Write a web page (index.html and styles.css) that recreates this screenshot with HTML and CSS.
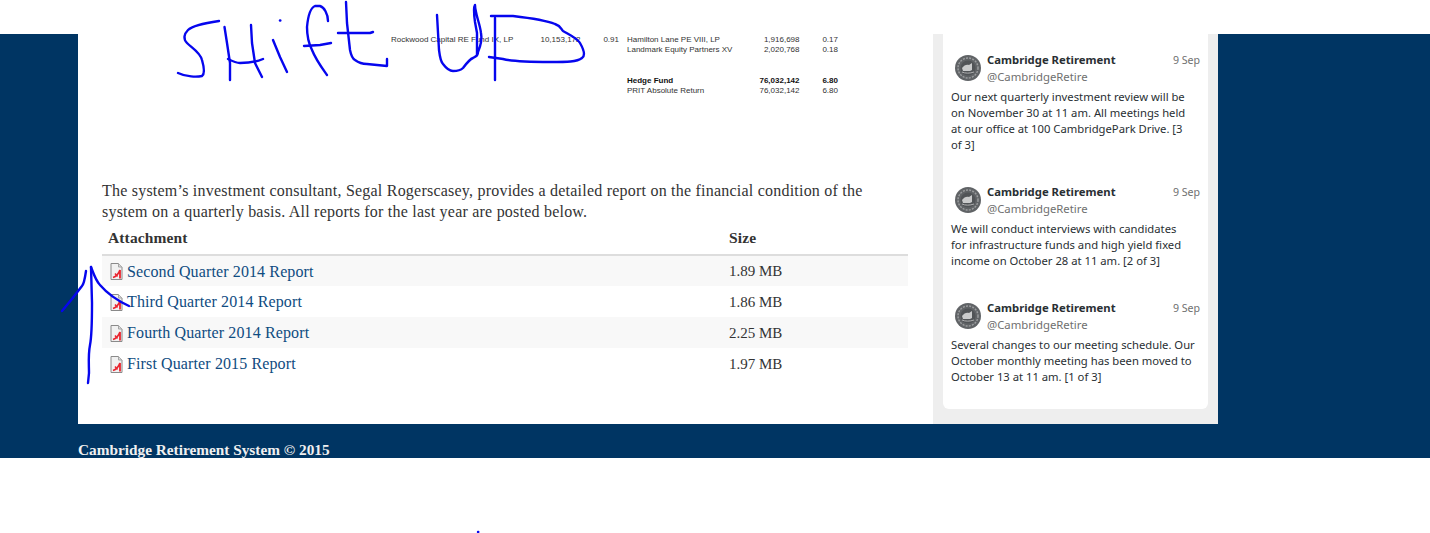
FILE: index.html
```html
<!DOCTYPE html>
<html lang="en">
<head>
<meta charset="utf-8">
<title>Cambridge Retirement System</title>
<link rel="stylesheet" href="styles.css">
</head>
<body>
<div class="top-strip"></div>
<div class="band">
  <div class="wrap">
    <main class="main">
      <div class="statement">
        <div class="st-col st-left">
          <div class="st-row"><span class="st-name">Rockwood Capital RE Fund IX, LP</span><span class="st-val">10,153,172</span><span class="st-pct">0.91</span></div>
        </div>
        <div class="st-col st-right">
          <div class="st-row"><span class="st-name">Hamilton Lane PE VIII, LP</span><span class="st-val">1,916,698</span><span class="st-pct">0.17</span></div>
          <div class="st-row"><span class="st-name">Landmark Equity Partners XV</span><span class="st-val">2,020,768</span><span class="st-pct">0.18</span></div>
          <div class="st-gap"></div>
          <div class="st-row st-bold"><span class="st-name">Hedge Fund</span><span class="st-val">76,032,142</span><span class="st-pct">6.80</span></div>
          <div class="st-row"><span class="st-name">PRIT Absolute Return</span><span class="st-val">76,032,142</span><span class="st-pct">6.80</span></div>
        </div>
      </div>
      <p class="intro">The system’s investment consultant, Segal Rogerscasey, provides a detailed report on the financial condition of the system on a quarterly basis. All reports for the last year are posted below.</p>
      <table class="files">
        <thead>
          <tr><th class="col-name">Attachment</th><th class="col-size">Size</th></tr>
        </thead>
        <tbody>
          <tr class="odd"><td><span class="file"><svg class="pdf" viewBox="0 0 13 17" aria-hidden="true"><use href="#pdf-icon"/></svg><a href="#">Second Quarter 2014 Report</a></span></td><td class="size">1.89 MB</td></tr>
          <tr><td><span class="file"><svg class="pdf" viewBox="0 0 13 17" aria-hidden="true"><use href="#pdf-icon"/></svg><a href="#">Third Quarter 2014 Report</a></span></td><td class="size">1.86 MB</td></tr>
          <tr class="odd"><td><span class="file"><svg class="pdf" viewBox="0 0 13 17" aria-hidden="true"><use href="#pdf-icon"/></svg><a href="#">Fourth Quarter 2014 Report</a></span></td><td class="size">2.25 MB</td></tr>
          <tr><td><span class="file"><svg class="pdf" viewBox="0 0 13 17" aria-hidden="true"><use href="#pdf-icon"/></svg><a href="#">First Quarter 2015 Report</a></span></td><td class="size">1.97 MB</td></tr>
        </tbody>
      </table>
    </main>
    <aside class="side">
      <div class="card">
        <article class="tweet">
          <header class="tw-head">
            <svg class="avatar" viewBox="0 0 26 26" aria-hidden="true"><use href="#seal"/></svg>
            <div class="tw-id"><span class="tw-name">Cambridge Retirement</span><span class="tw-handle">@CambridgeRetire</span></div>
            <span class="tw-date">9 Sep</span>
          </header>
          <p class="tw-text">Our next quarterly investment review will be<br>on November 30 at 11 am. All meetings held<br>at our office at 100 CambridgePark Drive. [3<br>of 3]</p>
        </article>
        <article class="tweet">
          <header class="tw-head">
            <svg class="avatar" viewBox="0 0 26 26" aria-hidden="true"><use href="#seal"/></svg>
            <div class="tw-id"><span class="tw-name">Cambridge Retirement</span><span class="tw-handle">@CambridgeRetire</span></div>
            <span class="tw-date">9 Sep</span>
          </header>
          <p class="tw-text">We will conduct interviews with candidates<br>for infrastructure funds and high yield fixed<br>income on October 28 at 11 am. [2 of 3]</p>
        </article>
        <article class="tweet">
          <header class="tw-head">
            <svg class="avatar" viewBox="0 0 26 26" aria-hidden="true"><use href="#seal"/></svg>
            <div class="tw-id"><span class="tw-name">Cambridge Retirement</span><span class="tw-handle">@CambridgeRetire</span></div>
            <span class="tw-date">9 Sep</span>
          </header>
          <p class="tw-text">Several changes to our meeting schedule. Our<br>October monthly meeting has been moved to<br>October 13 at 11 am. [1 of 3]</p>
        </article>
      </div>
    </aside>
  </div>
  <footer class="foot"><div class="foot-text">Cambridge Retirement System © 2015</div></footer>
</div>

<svg class="defs" width="0" height="0" aria-hidden="true">
  <defs>
    <symbol id="pdf-icon" viewBox="0 0 13 17">
      <path d="M1 .5h7.500L12 4v12.500H1z" fill="#f1f1f1" stroke="#8a8a8a"/>
      <path d="M8.500 .5V4H12" fill="#d8d8d8" stroke="#a5a5a5"/>
      <path d="M3 14.500c3-1 5.500-3.500 7-7.500v8.500" fill="none" stroke="#ea2630" stroke-width="1.800"/>
      <path d="M5 10.500l2.500 3" fill="none" stroke="#ea2630" stroke-width="1.500"/>
    </symbol>
    <symbol id="seal" viewBox="0 0 26 26">
      <circle cx="13" cy="13" r="13" fill="#606366"/>
      <circle cx="13" cy="13" r="10" fill="none" stroke="#9a9c9e" stroke-width="1.500" stroke-dasharray="2 1.200"/>
      <circle cx="13" cy="13" r="7.500" fill="#515457"/>
      <path d="M7 13c2-3 5-4 7-3l3-2v7l-2 1H8z" fill="#c9cacb"/>
      <path d="M7 17c3 1.500 8 1.500 12 0" fill="none" stroke="#b0b1b2"/>
    </symbol>
  </defs>
</svg>

<svg class="ink" viewBox="0 0 1430 533" aria-hidden="true">
  <g fill="none" stroke="#0606ee" stroke-width="2.400" stroke-linecap="round" stroke-linejoin="round">
    <path d="M219 21C205 23 192 26 188 30C184 34 183 39 187 43C192 48 200 52 202 60C204 67 205 74 202 76C197 77 186 77 178 73"/>
    <path d="M224.500 27 227 43 230 63 230 80"/>
    <path d="M251 25 252 43 255 63 262 77"/>
    <path d="M228 59C232 61 236 63 240 63C246 63 256 62 263 59"/>
    <path d="M273 40 280 57 287 72"/>
    <path d="M280 20.500h.300"/>
    <path d="M328 21C328 14 324 7 320 6L315 6C310 8 308 16 307 27C307 36 309 44 312 50C316 60 322 68 327 75"/>
    <path d="M304 46 320 45 331 43"/>
    <path d="M346 2 347 23 350 50C351 55 353 59 355 60C359 63 363 64 367 64L387 66 387 59"/>
    <path d="M338 33 370 33 373 32"/>
    <path d="M437 15 439 50C440 58 441 62 443 64C446 68 450 71 453 71C458 71 461 70 463 68C466 64 470 59 473 58C477 56 478 55 478 52C481 45 482 38 481 33C480 25 477 18 476 12C475 8 475 5 475 5C473 8 474 15 475 22L477 33 477 55"/>
    <path d="M495 18V80"/>
    <path d="M491 16 513 16C530 18 545 20 555 24C561 26 561 29 563 31C570 35 577 38 580 43C584 50 585 56 582 58C577 62 567 62 550 62C530 62 510 61 503 59L489 57"/>
    <path d="M91 267 92 303C92 320 92 335 90 345C88 355 89 365 89 373L88 383"/>
    <path d="M86 271C85 278 84 284 82 286C76 294 68 304 62 311"/>
    <path d="M91 267C94 275 96 281 100 285C106 292 116 300 129 306"/>
    <path d="M478 532h.300"/>
  </g>
</svg>
</body>
</html>
```

FILE: styles.css
```css
* { box-sizing: border-box; }

html, body {
  margin: 0;
  height: 533px;
  overflow: hidden;
  background: #fff;
}

body {
  position: relative;
  font-family: "Liberation Serif", serif;
  color: #333;
}

.top-strip { height: 34px; }

.band {
  height: 424px;
  background: #003563;
  overflow: hidden;
}

.wrap {
  display: flex;
  margin-left: 78px;
  width: 1140px;
  height: 390px;
}

.main {
  width: 855px;
  height: 390px;
  background: #fff;
  padding: 0 25px 0 24px;
}

/* financial statement */
.statement {
  display: flex;
  gap: 8px;
  height: 146px;
  padding-top: 1px;
  padding-left: 289px;
  font-family: "Liberation Sans", sans-serif;
  font-size: 8px;
  line-height: 10.400px;
  color: #333;
}

.st-left { width: 228px; }
.st-right { width: 211px; }
.st-row { display: flex; height: 10.400px; white-space: nowrap; }
.st-name { flex: 1; }
.st-val { text-align: right; }
.st-pct { width: 38.500px; text-align: right; }
.st-gap { height: 20px; }
.st-bold { font-weight: 700; color: #111; }

/* intro */
.intro {
  margin: 0;
  font-size: 16px;
  line-height: 21px;
  color: #333;
  letter-spacing: .22px;
}

/* attachments */
.files {
  width: 806px;
  margin-top: 2px;
  border-collapse: collapse;
  table-layout: fixed;
  font-size: 16px;
  letter-spacing: .12px;
}

.col-name { width: 621px; }

.files th {
  height: 31px;
  padding: 0 6px 2px;
  text-align: left;
  font-size: 15.500px;
  font-weight: 700;
  color: #333;
  border-bottom: 2px solid #ddd;
}

.files td {
  height: 31px;
  padding: 1px 6px 0;
  color: #333;
}

.files .size {
  font-size: 15px;
  letter-spacing: 0;
}

.odd { background: #f8f8f8; }

.file {
  display: flex;
  align-items: center;
  gap: 4px;
  padding-left: 2px;
}

.pdf { width: 13px; height: 17px; flex: none; }

.files a {
  color: #0f4c81;
  text-decoration: none;
}

/* sidebar */
.side {
  width: 285px;
  height: 390px;
  background: #eee;
  padding: 0 10px 15px;
}

.card {
  height: 375px;
  background: #fff;
  border-radius: 0 0 6px 6px;
  padding: 18px 8px 0;
  font-family: "Noto Sans", sans-serif;
}

.tweet { margin-bottom: 31px; }

.tw-head {
  display: flex;
  height: 37px;
  align-items: flex-start;
}

.avatar {
  width: 26px;
  height: 26px;
  margin: 3px 6px 0 4px;
  flex: none;
}

.tw-id { flex: 1; display: flex; flex-direction: column; }

.tw-name {
  font-size: 11.300px;
  font-weight: 700;
  line-height: 16px;
  color: #292f33;
}

.tw-handle {
  font-size: 11.350px;
  line-height: 17px;
  color: #707070;
}

.tw-date {
  font-size: 10.600px;
  line-height: 16px;
  color: #707070;
}

.tw-text {
  margin: 0;
  font-size: 11.250px;
  line-height: 16px;
  color: #292f33;
  white-space: nowrap;
}

/* footer */
.foot {
  height: 34px;
  padding: 16px 0 0 78px;
  overflow: hidden;
}

.foot-text {
  font-size: 15.300px;
  font-weight: 700;
  line-height: 20px;
  color: #f0f0f0;
}

/* hand-drawn annotation over the whole screenshot */
.ink {
  position: absolute;
  left: 0;
  top: 0;
  width: 1430px;
  height: 533px;
  pointer-events: none;
}

.defs { position: absolute; }
```
